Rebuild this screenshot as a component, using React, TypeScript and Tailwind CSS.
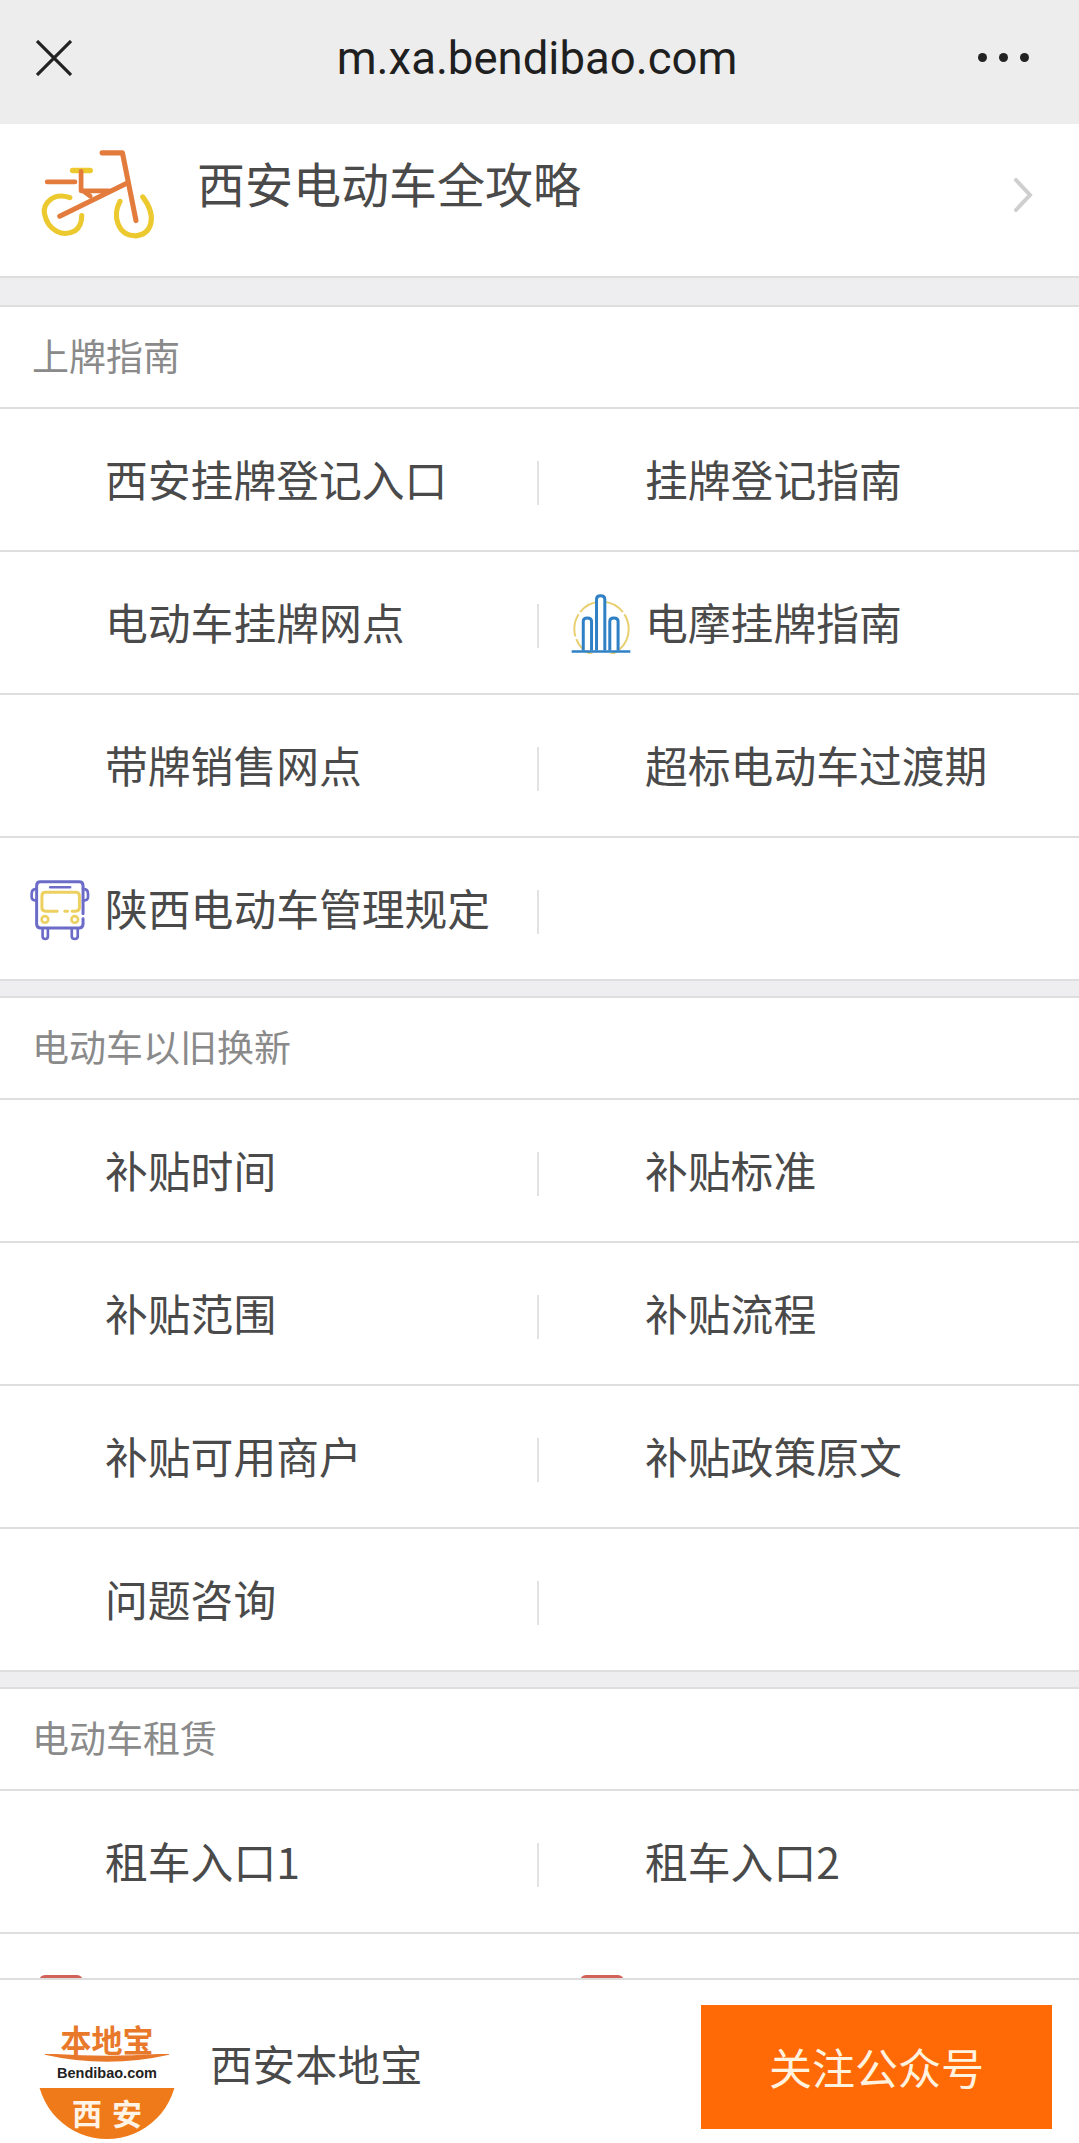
const FONT = "font-['Noto_Sans_CJK_SC','Noto_Sans',sans-serif]";

const BikeIcon = () => (
  <svg viewBox="110 80 360 280" className="w-[122px] h-[95px] shrink-0 mb-[14px]" fill="none" strokeLinecap="round" strokeLinejoin="round">
    <path d="M210 232 C160 215 130 250 135 280 C145 330 190 350 225 330 C240 320 245 300 245 285" stroke="#ecc92e" strokeWidth="15" />
    <path d="M358 243 C335 285 350 345 405 345 C450 340 470 290 425 230" stroke="#ecc92e" strokeWidth="15" />
    <path d="M218 152 H270" stroke="#ecc92e" strokeWidth="16" />
    <path d="M305 100 H365 L405 300" stroke="#e37b3c" strokeWidth="15" />
    <path d="M180 287 L378 190" stroke="#e37b3c" strokeWidth="15" />
    <path d="M243 155 V208 L270 228 M243 212 H325 M143 186 H225" stroke="#e37b3c" strokeWidth="14" />
  </svg>
);

const BuildingIcon = () => (
  <svg viewBox="60 70 190 180" className="w-[63px] h-[60px] mt-[2px]" fill="none">
    <circle cx="155" cy="175" r="82" stroke="#e8d070" strokeWidth="6" strokeDasharray="70 8" />
    <path d="M140 240 V85 Q140 75 152 75 Q165 75 165 85 V240 M100 240 V152 Q100 142 112 142 Q125 142 125 152 V240 M180 240 V152 Q180 142 192 142 Q205 142 205 152 V240" stroke="#2f80c4" strokeWidth="9" fill="#fff" />
    <path d="M65 243 H242" stroke="#2f80c4" strokeWidth="8" />
  </svg>
);

const BusIcon = () => (
  <svg viewBox="60 55 190 190" className="w-[63px] h-[63px] mt-[4px]" fill="none" strokeLinecap="round" strokeLinejoin="round">
    <path d="M223 160 V75 Q223 63 211 63 H95 Q83 63 83 75 V191 Q83 203 95 203 H211 Q223 203 223 191 V175" stroke="#6c6cc8" strokeWidth="9" />
    <path d="M83 85 Q68 85 68 100 V110 Q68 120 83 120 M223 85 Q238 85 238 100 V110 Q238 120 223 120 M124 80 H184" stroke="#6c6cc8" strokeWidth="8" />
    <path d="M101 205 V228 Q101 236 109 236 Q117 236 117 228 V205 M189 205 V228 Q189 236 198 236 Q207 236 207 228 V205" stroke="#6c6cc8" strokeWidth="8" />
    <path d="M145 152 H110 Q99 152 99 141 V106 Q99 95 110 95 H200 Q212 95 212 106 V141 Q212 152 200 152 H190 M168 152 H176" stroke="#ecd060" strokeWidth="9" />
    <circle cx="108" cy="177" r="10" stroke="#ecd060" strokeWidth="8" />
    <circle cx="198" cy="177" r="10" stroke="#ecd060" strokeWidth="8" />
  </svg>
);

const RedIcon = () => <span className="block w-[44px] h-[60px] rounded-[6px] bg-[#d0625a]" />;

type Item = { label?: string; icon?: React.ReactNode };

const Cell = ({ item, left }: { item: Item; left: boolean }) => (
  <div className={`flex items-center h-full ${left ? "w-[537px] pl-[29px]" : "flex-1 pl-[31px]"}`}>
    <div className="w-[63px] flex justify-center shrink-0">{item.icon}</div>
    {item.label && (
      <span className={`text-[42.8px] leading-none mb-[3px] text-[#4a4a4a] whitespace-nowrap ${left ? "ml-[13px]" : "ml-[12px]"}`}>
        {item.label}
      </span>
    )}
  </div>
);

const Row = ({ left, right }: { left: Item; right: Item }) => (
  <div className="flex items-center h-[143px] border-b-2 border-[#dedede]">
    <Cell item={left} left />
    <div className="w-[2px] h-[44px] mt-[6px] bg-[#e2e2e2] shrink-0" />
    <Cell item={right} left={false} />
  </div>
);

const Section = ({ title, rows }: { title: string; rows: [Item, Item][] }) => (
  <section className="bg-white border-t-2 border-[#dedede] mb-[15px]">
    <div className="flex items-center h-[102px] px-[32px] pb-[4px] border-b-2 border-[#dedede] text-[37px] leading-none text-[#8a8a8a]">
      {title}
    </div>
    {rows.map(([l, r], i) => (
      <Row key={i} left={l} right={r} />
    ))}
  </section>
);

const SECTIONS: { title: string; rows: [Item, Item][] }[] = [
  {
    title: "上牌指南",
    rows: [
      [{ label: "西安挂牌登记入口" }, { label: "挂牌登记指南" }],
      [{ label: "电动车挂牌网点" }, { label: "电摩挂牌指南", icon: <BuildingIcon /> }],
      [{ label: "带牌销售网点" }, { label: "超标电动车过渡期" }],
      [{ label: "陕西电动车管理规定", icon: <BusIcon /> }, {}],
    ],
  },
  {
    title: "电动车以旧换新",
    rows: [
      [{ label: "补贴时间" }, { label: "补贴标准" }],
      [{ label: "补贴范围" }, { label: "补贴流程" }],
      [{ label: "补贴可用商户" }, { label: "补贴政策原文" }],
      [{ label: "问题咨询" }, {}],
    ],
  },
  {
    title: "电动车租赁",
    rows: [
      [{ label: "租车入口1" }, { label: "租车入口2" }],
      [{ icon: <RedIcon /> }, { icon: <RedIcon /> }],
    ],
  },
];

export default function App() {
  return (
    <div className={`${FONT} relative flex flex-col w-[1079px] h-[2143px] overflow-hidden bg-[#eeeef1]`}>
      {/* WeChat title bar */}
      <header className="flex items-center justify-between shrink-0 h-[124px] pl-[36px] pr-[50px] bg-[#ededed]">
        <svg viewBox="0 0 36 36" className="w-[36px] h-[36px] mb-[9px]" fill="none" stroke="#222" strokeWidth="3.2">
          <path d="M1 1 L35 35 M35 1 L1 35" />
        </svg>
        <span className="font-['Roboto',sans-serif] text-[45.5px] leading-none text-[#1f1f1f] mb-[6px] ml-[24px]">m.xa.bendibao.com</span>
        <div className="flex gap-[12px] mb-[10px]">
          <span className="w-[9px] h-[9px] rounded-full bg-[#222]" />
          <span className="w-[9px] h-[9px] rounded-full bg-[#222]" />
          <span className="w-[9px] h-[9px] rounded-full bg-[#222]" />
        </div>
      </header>

      {/* Topic banner */}
      <div className="flex items-center shrink-0 h-[154px] pl-[36px] pr-[44px] bg-white border-b-2 border-[#dedede] mb-[27px]">
        <BikeIcon />
        <span className="ml-[39px] mb-[36px] text-[48px] leading-none text-[#4a4a4a]">西安电动车全攻略</span>
        <svg viewBox="0 0 20 34" className="w-[20px] h-[34px] ml-auto mb-[10px] -translate-x-[2px]" fill="none" stroke="#cfcfcf" strokeWidth="4" strokeLinecap="round">
          <path d="M3 2 L17 17 L3 32" />
        </svg>
      </div>

      {SECTIONS.map((s) => (
        <Section key={s.title} title={s.title} rows={s.rows} />
      ))}

      {/* Follow bar sits over the list */}
      <footer className="absolute inset-x-0 bottom-0 h-[165px] flex items-center pl-[37px] pr-[27px] bg-white border-t-2 border-[#dedede]">
        <div className="w-[140px] h-[140px] shrink-0 rounded-full overflow-hidden bg-white mt-[15px]">
          <div className="flex justify-center pt-[24px] text-[31px] leading-none font-bold text-[#e8782a]">本地宝</div>
          <svg viewBox="0 0 140 8" className="block w-[140px] h-[8px]" fill="none">
            <path d="M8 0 Q70 14 132 0 Q70 5 8 0Z" fill="#e8782a" stroke="#e8782a" strokeWidth="1.5" />
          </svg>
          <div className="flex justify-center h-[26px] font-['Liberation_Sans',sans-serif] text-[14.5px] leading-[22px] font-bold text-[#222]">Bendibao.com</div>
          <div className="flex justify-center gap-[10px] pt-[9px] h-[60px] bg-[#ee7a1a] text-[30px] leading-[31px] font-bold text-[#fff3e6]">
            <span>西</span>
            <span>安</span>
          </div>
        </div>
        <span className="ml-[33px] mt-[4px] text-[42.5px] leading-none text-[#4a4a4a]">西安本地宝</span>
        <button type="button" className="ml-auto w-[351px] h-[124px] mt-[10px] bg-[#ff6a06] text-[43px] leading-none text-[#fff3e0]">
          关注公众号
        </button>
      </footer>
    </div>
  );
}
